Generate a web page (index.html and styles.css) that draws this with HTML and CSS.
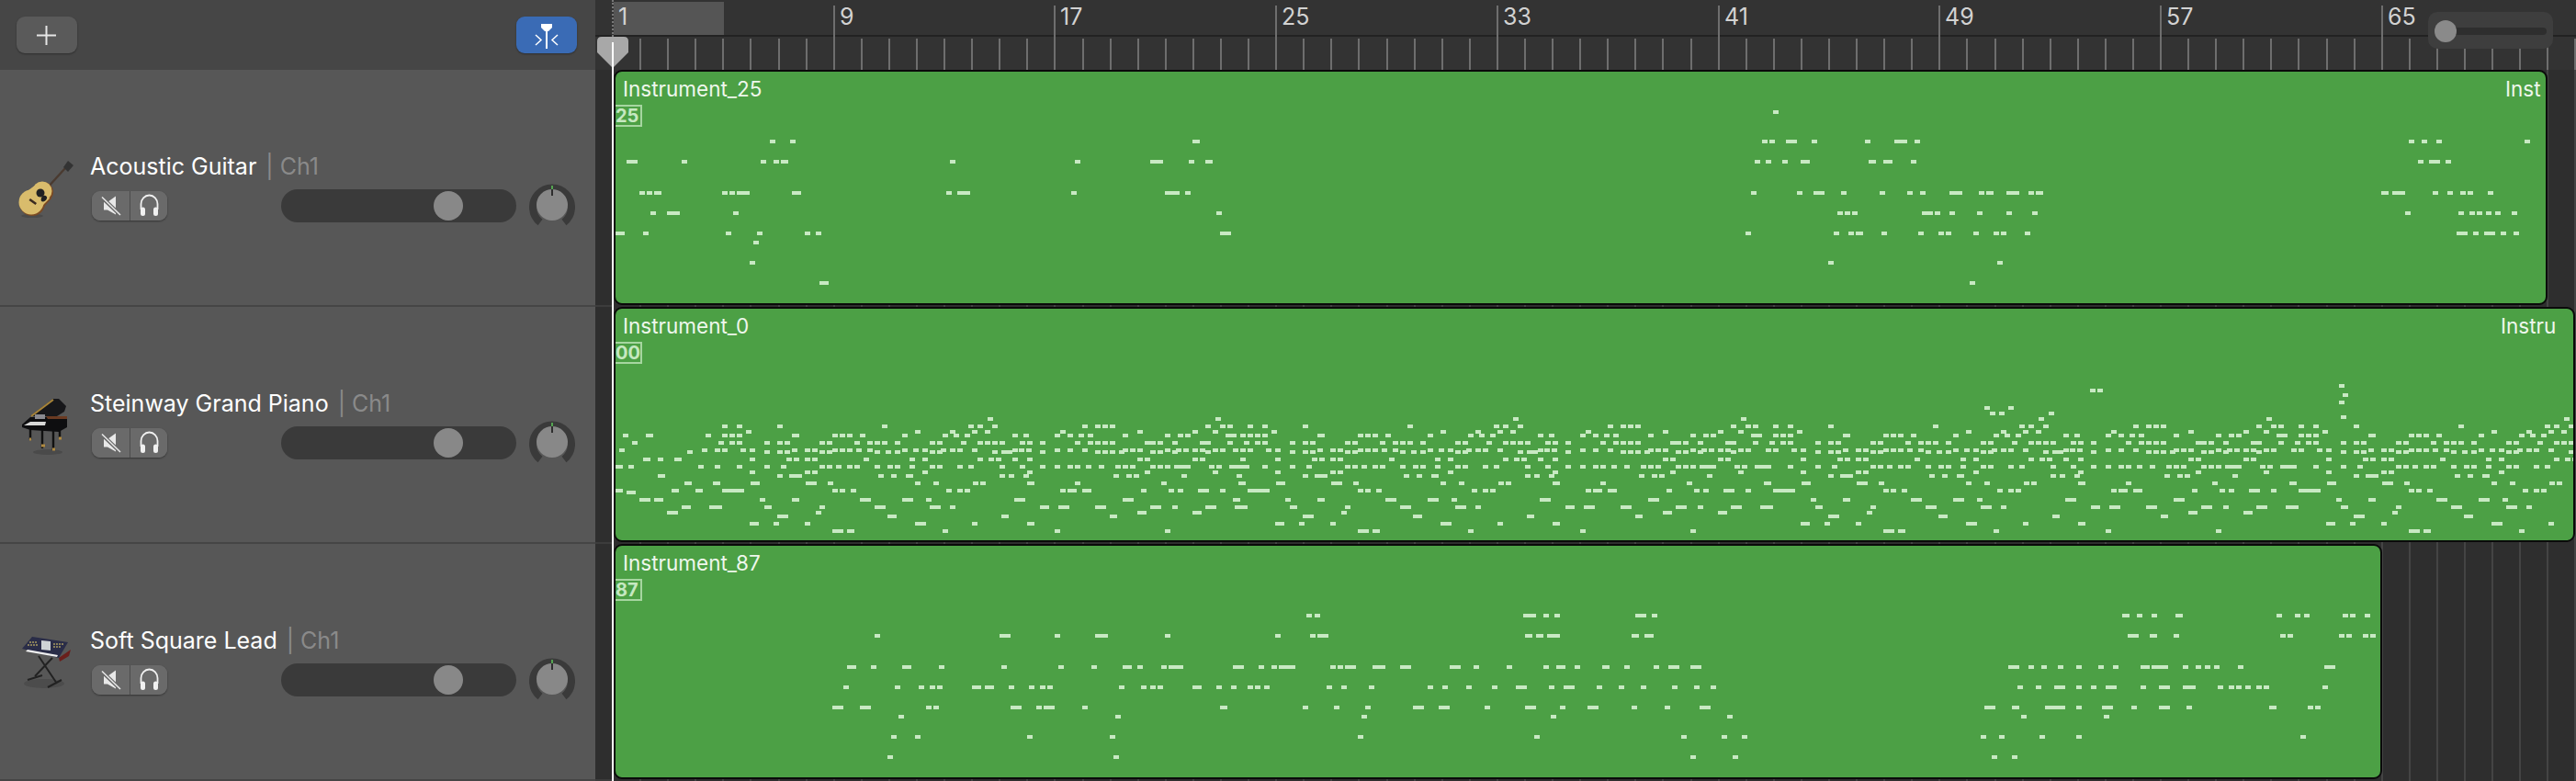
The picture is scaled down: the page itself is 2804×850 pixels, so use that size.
FILE: index.html
```html
<!DOCTYPE html>
<html lang="en">
<head>
<meta charset="UTF-8">
<title>Tracks</title>
<link rel="stylesheet" href="styles.css">
</head>
<body>

<div class="app">
  <aside class="sidebar">
    <div class="sidebar-head">
      <button class="tool-btn">
        <svg width="66" height="40" viewBox="0 0 66 40"><path d="M32.500 10v21M22 20.500h21" stroke="#e6e6e6" stroke-width="2" fill="none"/></svg>
      </button>
      <button class="tool-btn tool-btn-blue">
        <svg width="66" height="40" viewBox="0 0 66 40">
          <path d="M27 8h12v4l-4 4h-1v19h-2V16h-1l-4-4z" fill="#fff"/>
          <path d="M21 20l6 5.500-6 5.500M45 20l-6 5.500 6 5.500" stroke="#fff" stroke-width="1.500" fill="none"/>
        </svg>
      </button>
    </div>

    <div class="track">
      <svg class="track-icon" width="64" height="64" viewBox="0 0 64 64">
        <ellipse cx="15" cy="61" rx="12" ry="2" fill="#4a4a4a"/>
        <path d="M31 31L51 9" stroke="#4a3a30" stroke-width="2.400"/>
        <path d="M49 8l5-7 6 5-6 7z" fill="#333"/>
        <path d="M19 28L36 42L27 52L6 38z" fill="#7a4a24"/>
        <circle cx="15" cy="47" r="14" fill="#7a4a24"/>
        <circle cx="27" cy="35" r="11" fill="#7a4a24"/>
        <path d="M19 27L34 42L26 50L7 36z" fill="#d9bc6c"/>
        <circle cx="14" cy="46" r="13.500" fill="#d9bc6c"/>
        <circle cx="26" cy="34" r="10.500" fill="#d9bc6c"/>
        <circle cx="24" cy="36" r="4.500" fill="#222"/>
        <path d="M27 39c2-1 5 1 4 3-1 3-4 4-6 3-1-2 0-5 2-6z" fill="#222"/>
        <path d="M13 42l7 5-1.500 2-7-5z" fill="#3a2a20"/>
      </svg>
      <div class="track-body">
        <div class="track-name">Acoustic Guitar <span class="track-ch">| Ch1</span></div>
        <div class="track-controls">
          <div class="btn-group">
            <button class="mini-btn">
              <svg width="41" height="32" viewBox="0 0 41 32"><path d="M13 12h4l9-6.500v20l-9-5h-4z" fill="#e8e8e8"/><path d="M10 6l21 20" stroke="#6a6a6a" stroke-width="4"/><path d="M11 6.500l20 19.500" stroke="#e8e8e8" stroke-width="1.500"/></svg>
            </button>
            <button class="mini-btn">
              <svg width="41" height="32" viewBox="0 0 41 32"><path d="M11.500 20v-6a9 9.500 0 0 1 18 0v6" stroke="#f0f0f0" stroke-width="1.800" fill="none"/><rect x="11" y="17.500" width="5" height="9.500" rx="2.500" fill="#f0f0f0"/><rect x="25" y="17.500" width="5" height="9.500" rx="2.500" fill="#f0f0f0"/></svg>
            </button>
          </div>
          <div class="volume"><div class="volume-thumb"></div></div>
          <svg class="knob" width="50" height="48" viewBox="0 0 50 48"><path d="M12 44A21 21 0 1 1 38 44" stroke="#3a3a3a" stroke-width="8" fill="none"/><circle cx="25" cy="25" r="17" fill="#888"/><path d="M25 4v4" stroke="#5ec85a" stroke-width="1.500"/><path d="M25 8v7" stroke="#111" stroke-width="1.500"/></svg>
        </div>
      </div>
    </div>

    <div class="track">
      <svg class="track-icon" width="64" height="64" viewBox="0 0 64 64">
        <ellipse cx="32" cy="60" rx="16" ry="3" fill="#4a4a4a"/>
        <path d="M13 31V46M38 34v24M45 32v12M26 35v21" stroke="#111" stroke-width="2.400"/>
        <path d="M12 46h2M25 53h4M37 57h3M44 45h3" stroke="#b08a40" stroke-width="3"/>
        <path d="M4 30L13 22H53L53 33L44 38L13 36L4 33z" fill="#0e0e10"/>
        <path d="M13 21L38 2H44L52 10L50 16L42 21z" fill="#17171a"/>
        <path d="M14 21L38 3" stroke="#a88438" stroke-width="2"/>
        <path d="M30 21H53V24H32z" fill="#6a3a22"/>
        <path d="M18 19h11v5H18z" fill="#8a8a90"/>
        <path d="M6 31L13 27H30L29 31z" fill="#d8d8d8"/>
      </svg>
      <div class="track-body">
        <div class="track-name">Steinway Grand Piano <span class="track-ch">| Ch1</span></div>
        <div class="track-controls">
          <div class="btn-group">
            <button class="mini-btn">
              <svg width="41" height="32" viewBox="0 0 41 32"><path d="M13 12h4l9-6.500v20l-9-5h-4z" fill="#e8e8e8"/><path d="M10 6l21 20" stroke="#6a6a6a" stroke-width="4"/><path d="M11 6.500l20 19.500" stroke="#e8e8e8" stroke-width="1.500"/></svg>
            </button>
            <button class="mini-btn">
              <svg width="41" height="32" viewBox="0 0 41 32"><path d="M11.500 20v-6a9 9.500 0 0 1 18 0v6" stroke="#f0f0f0" stroke-width="1.800" fill="none"/><rect x="11" y="17.500" width="5" height="9.500" rx="2.500" fill="#f0f0f0"/><rect x="25" y="17.500" width="5" height="9.500" rx="2.500" fill="#f0f0f0"/></svg>
            </button>
          </div>
          <div class="volume"><div class="volume-thumb"></div></div>
          <svg class="knob" width="50" height="48" viewBox="0 0 50 48"><path d="M12 44A21 21 0 1 1 38 44" stroke="#3a3a3a" stroke-width="8" fill="none"/><circle cx="25" cy="25" r="17" fill="#888"/><path d="M25 4v4" stroke="#5ec85a" stroke-width="1.500"/><path d="M25 8v7" stroke="#111" stroke-width="1.500"/></svg>
        </div>
      </div>
    </div>

    <div class="track">
      <svg class="track-icon" width="64" height="64" viewBox="0 0 64 64">
        <ellipse cx="28" cy="54" rx="22" ry="5" fill="#4c4c4c"/>
        <path d="M22 24L42 54M37 26L18 46M10 50L26 45M32 58L47 50" stroke="#222" stroke-width="2"/>
        <path d="M55 24L57 17L44 26L45 30z" fill="#6a1f1c"/>
        <path d="M4 16L15 3L54 9L44 26z" fill="#2a2d48"/>
        <path d="M25 7L35 8V18L25 17z" fill="#cfd4d6"/>
        <path d="M10 12h11M12 9h9M38 11h11M38 14h8" stroke="#a89a60" stroke-width="1.500" stroke-dasharray="2 1"/>
        <path d="M10 17L43 23L42 25L8 19z" fill="#eee"/>
      </svg>
      <div class="track-body">
        <div class="track-name">Soft Square Lead <span class="track-ch">| Ch1</span></div>
        <div class="track-controls">
          <div class="btn-group">
            <button class="mini-btn">
              <svg width="41" height="32" viewBox="0 0 41 32"><path d="M13 12h4l9-6.500v20l-9-5h-4z" fill="#e8e8e8"/><path d="M10 6l21 20" stroke="#6a6a6a" stroke-width="4"/><path d="M11 6.500l20 19.500" stroke="#e8e8e8" stroke-width="1.500"/></svg>
            </button>
            <button class="mini-btn">
              <svg width="41" height="32" viewBox="0 0 41 32"><path d="M11.500 20v-6a9 9.500 0 0 1 18 0v6" stroke="#f0f0f0" stroke-width="1.800" fill="none"/><rect x="11" y="17.500" width="5" height="9.500" rx="2.500" fill="#f0f0f0"/><rect x="25" y="17.500" width="5" height="9.500" rx="2.500" fill="#f0f0f0"/></svg>
            </button>
          </div>
          <div class="volume"><div class="volume-thumb"></div></div>
          <svg class="knob" width="50" height="48" viewBox="0 0 50 48"><path d="M12 44A21 21 0 1 1 38 44" stroke="#3a3a3a" stroke-width="8" fill="none"/><circle cx="25" cy="25" r="17" fill="#888"/><path d="M25 4v4" stroke="#5ec85a" stroke-width="1.500"/><path d="M25 8v7" stroke="#111" stroke-width="1.500"/></svg>
        </div>
      </div>
    </div>
  </aside>

  <main class="arrange">
    <div class="ruler" id="ruler">
      <div class="cycle"></div>
      <div class="ruler-split"></div>
      <div class="start-mark"></div>
    </div>

    <div class="lanes" id="lanes">
      <div class="lane">
        <div class="region region-a" data-notes="a">
          <div class="region-title">Instrument_25</div>
          <div class="region-repeat">Inst</div>
          <div class="region-badge">25</div>
        </div>
      </div>
      <div class="lane">
        <div class="region region-b" data-notes="b">
          <div class="region-title">Instrument_0</div>
          <div class="region-repeat">Instru</div>
          <div class="region-badge">00</div>
        </div>
      </div>
      <div class="lane">
        <div class="region region-c" data-notes="c">
          <div class="region-title">Instrument_87</div>
          <div class="region-badge">87</div>
        </div>
      </div>
    </div>

    <div class="zoom-slider"><div class="zoom-thumb"></div></div>

    <div class="playhead">
      <svg width="34" height="34" viewBox="0 0 34 34"><path d="M5 0H29Q34 0 34 5V17L17 34L0 17V5Q0 0 5 0z" fill="#a8a8a8"/></svg>
    </div>
  </main>
</div>

<script src="script.js"></script>
</body>
</html>
```

FILE: styles.css
```css
* {
  box-sizing: border-box;
}
body {
  margin: 0;
  background: #2e2e2e;
  font-family: Inter, "Liberation Sans", sans-serif;
  overflow: hidden;
}
button {
  font: inherit;
  padding: 0;
  border: none;
  display: block;
}
.app {
  display: flex;
  width: 2804px;
  height: 850px;
  overflow: hidden;
}

/* left column */
.sidebar {
  width: 648px;
  flex: none;
  background: #575757;
}
.sidebar-head {
  height: 76px;
  background: #464646;
  display: flex;
  justify-content: space-between;
  align-items: flex-start;
  padding: 18px 20px 0 18px;
}
.tool-btn {
  width: 66px;
  height: 40px;
  border-radius: 9px;
  background: #5a5a5a;
  box-shadow: 0 1px 2px rgba(0, 0, 0, 0.35);
}
.tool-btn-blue {
  background: #3a6bb5;
}
.track {
  height: 258px;
  border-bottom: 2px solid #454545;
  display: flex;
  align-items: center;
  padding: 4px 22px 0 20px;
}
.track-icon {
  flex: none;
  margin-right: 14px;
}
.track-body {
  flex: 1;
}
.track-name {
  height: 30px;
  margin-bottom: 2px;
  font-size: 25px;
  line-height: 30px;
  color: #fff;
  white-space: nowrap;
}
.track-ch {
  color: #8a8a8a;
  margin-left: 3px;
}
.track-controls {
  display: flex;
  align-items: center;
  height: 48px;
}
.btn-group {
  display: flex;
  margin: 4px 0 0 2px;
  border-radius: 9px;
  overflow: hidden;
  background: #6a6a6a;
  box-shadow: 0 1px 2px rgba(0, 0, 0, 0.4);
}
.mini-btn {
  width: 41px;
  height: 32px;
  background: #6a6a6a;
}
.mini-btn + .mini-btn {
  border-left: 1px solid #4c4c4c;
}
.volume {
  width: 256px;
  height: 36px;
  margin: 4px 14px 0 auto;
  border-radius: 18px;
  background: #3a3a3a;
  padding: 2px 0 0 166px;
}
.volume-thumb {
  width: 32px;
  height: 32px;
  border-radius: 50%;
  background: #888;
}
.knob {
  flex: none;
}

/* timeline */
.arrange {
  flex: 1;
  position: relative;
  background: #2e2e2e;
  overflow: hidden;
}
.ruler {
  position: relative;
  height: 76px;
  background: #333;
}
.ruler-split {
  position: absolute;
  left: 0;
  right: 0;
  top: 38px;
  height: 2px;
  background: #222;
}
.cycle {
  position: absolute;
  left: 20px;
  top: 2px;
  width: 120px;
  height: 36px;
  background: #555;
}
.start-mark {
  position: absolute;
  left: 18px;
  top: 0;
  height: 40px;
  border-left: 2px dotted #777;
}
.ruler-tick {
  position: absolute;
  top: 42px;
  bottom: 0;
  width: 2px;
  background: #6e6e6e;
}
.ruler-tick-major {
  top: 6px;
}
.ruler-num {
  position: absolute;
  top: 2px;
  font-size: 25px;
  line-height: 32px;
  color: #d2d2d2;
}
.lanes {
  position: relative;
}
.lane {
  height: 258px;
  padding-left: 20px;
  background: linear-gradient(#3c3c3c, #3c3c3c) 0 100% / 18px 2px no-repeat;
}
.grid-line {
  position: absolute;
  top: 0;
  bottom: 0;
  width: 2px;
  background: #444;
}
.region {
  position: relative;
  height: 256px;
  border: 2px solid #0a0a0a;
  border-radius: 9px;
  background: #4ca045;
  overflow: hidden;
}
.region-a {
  width: 2105px;
}
.region-b {
  width: 2135px;
}
.region-c {
  width: 1925px;
}
.region-title {
  padding: 4px 0 0 8px;
  height: 35px;
  font-size: 22.500px;
  line-height: 30px;
  color: #eef7ec;
  white-space: nowrap;
}
.region-repeat {
  position: absolute;
  top: 4px;
  left: 2057px;
  font-size: 22.500px;
  line-height: 30px;
  color: #eef7ec;
  white-space: nowrap;
}
.region-b .region-repeat {
  left: 2052px;
}
.region-badge {
  width: 29px;
  height: 24px;
  margin-top: 1px;
  border: 2px solid #a6d6a0;
  border-left: none;
  font-size: 20px;
  line-height: 20px;
  font-weight: 700;
  color: #c5e8c0;
  white-space: nowrap;
}
.notes {
  position: absolute;
  left: 0;
  top: 0;
}
.notes rect {
  fill: #c8e9c3;
}
.zoom-slider {
  position: absolute;
  left: 1995px;
  top: 13px;
  width: 136px;
  height: 40px;
  border-radius: 10px;
  background: #3e3e3e;
  padding: 9px 7px;
}
.zoom-slider::before {
  content: "";
  position: absolute;
  left: 10px;
  right: 7px;
  top: 17px;
  height: 8px;
  border-radius: 4px;
  background: #2e2e2e;
}
.zoom-thumb {
  position: relative;
  width: 24px;
  height: 24px;
  border-radius: 50%;
  background: #8a8a8a;
}
.playhead {
  position: absolute;
  left: 2px;
  top: 40px;
  width: 34px;
  height: 810px;
}
.playhead svg {
  display: block;
}
.playhead::after {
  content: "";
  position: absolute;
  left: 16px;
  top: 6px;
  bottom: 0;
  width: 2px;
  background: #fff;
}
```

FILE: script.js
```js
// bar positions in the arrange area
var ORIGIN = 18;     // x of bar 1, from the left of .arrange
var BAR = 30.09;
var REGION_LEFT = 670;

var ruler = document.getElementById('ruler');
var lanes = document.getElementById('lanes');

function addDiv(parent, cls, x, text) {
  var el = document.createElement('div');
  el.className = cls;
  el.style.left = x + 'px';
  if (text) el.textContent = text;
  parent.appendChild(el);
}

function makeGrid(x) {
  var el = document.createElement('div');
  el.className = 'grid-line';
  el.style.left = x + 'px';
  return el;
}

for (var i = 0; i <= 71; i++) {
  var x = Math.round(ORIGIN + BAR * i);
  var major = i % 8 === 0;
  if (i > 0) addDiv(ruler, major ? 'ruler-tick ruler-tick-major' : 'ruler-tick', x);
  if (major) addDiv(ruler, 'ruler-num', x + 7, String(i + 1));
  if (i > 0) lanes.insertBefore(makeGrid(x), lanes.firstChild);
}

// rows of notes: y on the page, then "x" (6px wide) or "x:width"
var NOTES = {
  a: {
    122: '1930',
    154: '838 860 1298:8 1918 1926 1944:12 1972 2030 2062:14 2084 2622 2636 2652 2748',
    176: '682:12 742 828 842 850:8 1034 1170 1252:14 1294 1312:8 1910 1922 1940 1960:10 2034:8 2050:10 2080 2632 2644:12 2662',
    210: '696 704 712:8 786 794 802:14 862:10 1030 1042:14 1166 1268:16 1290 1906 1956 1974:12 2004 2046 2076 2090 2122:14 2154 2162:8 2184:14 2208 2216:8 2592:8 2604:14 2648 2664 2678 2686 2708',
    232: '708 726:14 798 1324 2000 2008 2016 2092:12 2106 2122 2152 2184 2212 2618 2676 2688 2696 2706 2716 2734',
    254: '669:11 700 790 824 876 888 1328:12 1900 1996 2012 2020:8 2048 2088 2110 2118 2148 2170 2178 2204 2674:12 2692 2704:12 2722 2736',
    264: '820',
    286: '816 1990 2174',
    308: '892:10 2144'
  },
  c: {
    670: '1422 1431 1658:14 1680 1692 1780:12 1798 2310:8 2326 2342 2368:8 2478 2498 2508 2550 2558 2574',
    692: '952 1088:12 1148 1192:14 1268 1388 1426 1434:12 1660:8 1672:8 1684:14 1776:8 1790:10 2316:12 2340:8 2366 2482 2490 2546 2554 2572 2580',
    726: '922:10 948 982:10 1022 1090 1152 1188 1222:10 1238 1264 1272:16 1342:12 1370 1384 1392:18 1448 1456 1464:12 1494:14 1524:12 1578:12 1604 1640 1680 1694:10 1714 1744:8 1768 1800 1816:12 1840:12 2186:12 2208 2222 2240 2260 2284 2300 2330:10 2342:18 2376 2390 2400 2410 2436 2530:12',
    748: '918 974 1000 1012 1020 1058:10 1072:10 1098 1120 1132 1140 1218 1242 1252 1260 1298:10 1324 1340 1358 1366 1376 1444 1460 1490 1554 1570 1596 1624 1650:12 1686 1702:12 1738 1762 1786 1820 1844 1862 2196 2216 2236:12 2260 2276 2292:12 2330 2350:12 2376:14 2414 2426 2434 2444 2456 2464 2528',
    770: '906:12 936:12 1008 1016 1100:12 1128 1136:12 1178 1328:8 1418 1452 1486 1538:12 1566:12 1616 1660:12 1698 1728:12 1776 1812 1850:12 2160:12 2190:8 2226:22 2260 2288:12 2320 2350:12 2380 2470:8 2512 2520',
    780: '978 1214 1482 1688 1880 2200 2290',
    802: '970 996 1118 1208 1478 1670 1830 1874 1896 2156 2176 2220 2260 2504',
    824: '966 1212 1840 1886 2168 2190'
  },
  // one stretch of the piano part, played again along the region
  tile: {
    456: '1075 1323',
    464: '786 802 846 960 1054 1064 1080 1178 1192 1200 1208 1312 1328 1336',
    470: '812 996 1034 1058 1072 1154 1238 1298 1320',
    474: '678 703:8 768 786 794 802 862:8 906 914 922 936 982 1026 1038 1050 1102 1114 1148 1162 1174 1184 1222 1268 1282 1290 1334:8 1350',
    482: '688 782 794 802 832 846 854 892 900 930 944 952 960 974 1012 1020 1046 1064 1072 1080 1088 1110 1118 1132 1170 1184 1192 1200 1208 1246:12 1260 1276 1306:12 1336',
    490: '674 764 778 786 806 816 862 876 884 906 914 922 932 944 982 994 1004 1024 1034 1042 1058 1102 1109 1117 1148 1162 1178 1222 1230 1238 1268 1280 1288 1298 1306 1320 1328 1342',
    492: '748 832 846 854 892 900 952 964 974 1012 1020 1080 1090:12 1132 1192 1200 1208 1218 1252 1260 1276 1312',
    500: '700:8 716 734:8 816 856 864 876 884 940 990 1004 1064 1076 1084 1102 1118 1238 1246 1298 1306 1350',
    508: '670:8 684 760 778 802 832 850 892 900 910 922 930 952 966 974 990 1012 1020 1042 1054 1088 1110 1132 1148 1162 1170 1182 1196 1214 1222 1230 1252 1260 1268 1278:12 1290 1316 1324 1338:12 1354',
    514: '816 876 884 1004 1118 1246 1320',
    518: '716:8 846 859:14 956 970 986:8 1088 1098 1114 1212 1226 1234 1286 1346',
    526: '745:8 776:8 817:10 877:12 901 996 1016 1059 1067 1118:8 1170 1264',
    534: '670:8 731:8 757:8 786:24 906 914 926 1030 1042 1050 1154 1162:10 1178:10 1242 1272 1282 1304:12 1328',
    536: '682:10',
    544: '696:12 712:10 827 862:8 936:12 982:12 1008 1104:12 1222:12 1342:8',
    552: '742:10 772:14 832:8 892 952:12 1012:12 1034 1132:10 1152:12 1192:12 1252:12 1276 1312:12',
    558: '726:12 888 1238:10 1298:10',
    562: '846:12 966:10 1090:8 1208:8',
    570: '816:10 842 876 996:12 1058 1118:8',
    578: '906:12 922:8 1026 1148 1268'
  },
  bExtra: {
    420: '2546',
    425: '2275 2283',
    430: '2550',
    438: '2546',
    444: '2160 2186',
    450: '2166 2176 2230',
    454: '2548'
  }
};

function addRows(svg, rows, shift, minX, maxX) {
  Object.keys(rows).forEach(function(y) {
    rows[y].split(' ').forEach(function(item) {
      var parts = item.split(':');
      var nx = Number(parts[0]);
      if (nx < minX || nx >= maxX) return;
      var r = document.createElementNS('http://www.w3.org/2000/svg', 'rect');
      r.setAttribute('x', nx + shift - REGION_LEFT);
      r.setAttribute('y', Number(y) - 2 - svg.regionTop);
      r.setAttribute('width', parts[1] || 6);
      r.setAttribute('height', 4);
      svg.appendChild(r);
    });
  });
}

document.querySelectorAll('.region').forEach(function(region, n) {
  var svg = document.createElementNS('http://www.w3.org/2000/svg', 'svg');
  svg.setAttribute('class', 'notes');
  svg.setAttribute('width', 2140);
  svg.setAttribute('height', 252);
  svg.regionTop = 78 + n * 258;
  var key = region.getAttribute('data-notes');
  if (key === 'b') {
    // the first bars are sparse, later passes only use the busy part
    addRows(svg, NOTES.tile, 0, 0, 9999);
    for (var k = 1; k < 4; k++) addRows(svg, NOTES.tile, k * 572, 768, 1340);
    addRows(svg, NOTES.bExtra, 0, 0, 9999);
  } else {
    addRows(svg, NOTES[key], 0, 0, 9999);
  }
  region.appendChild(svg);
});
```
